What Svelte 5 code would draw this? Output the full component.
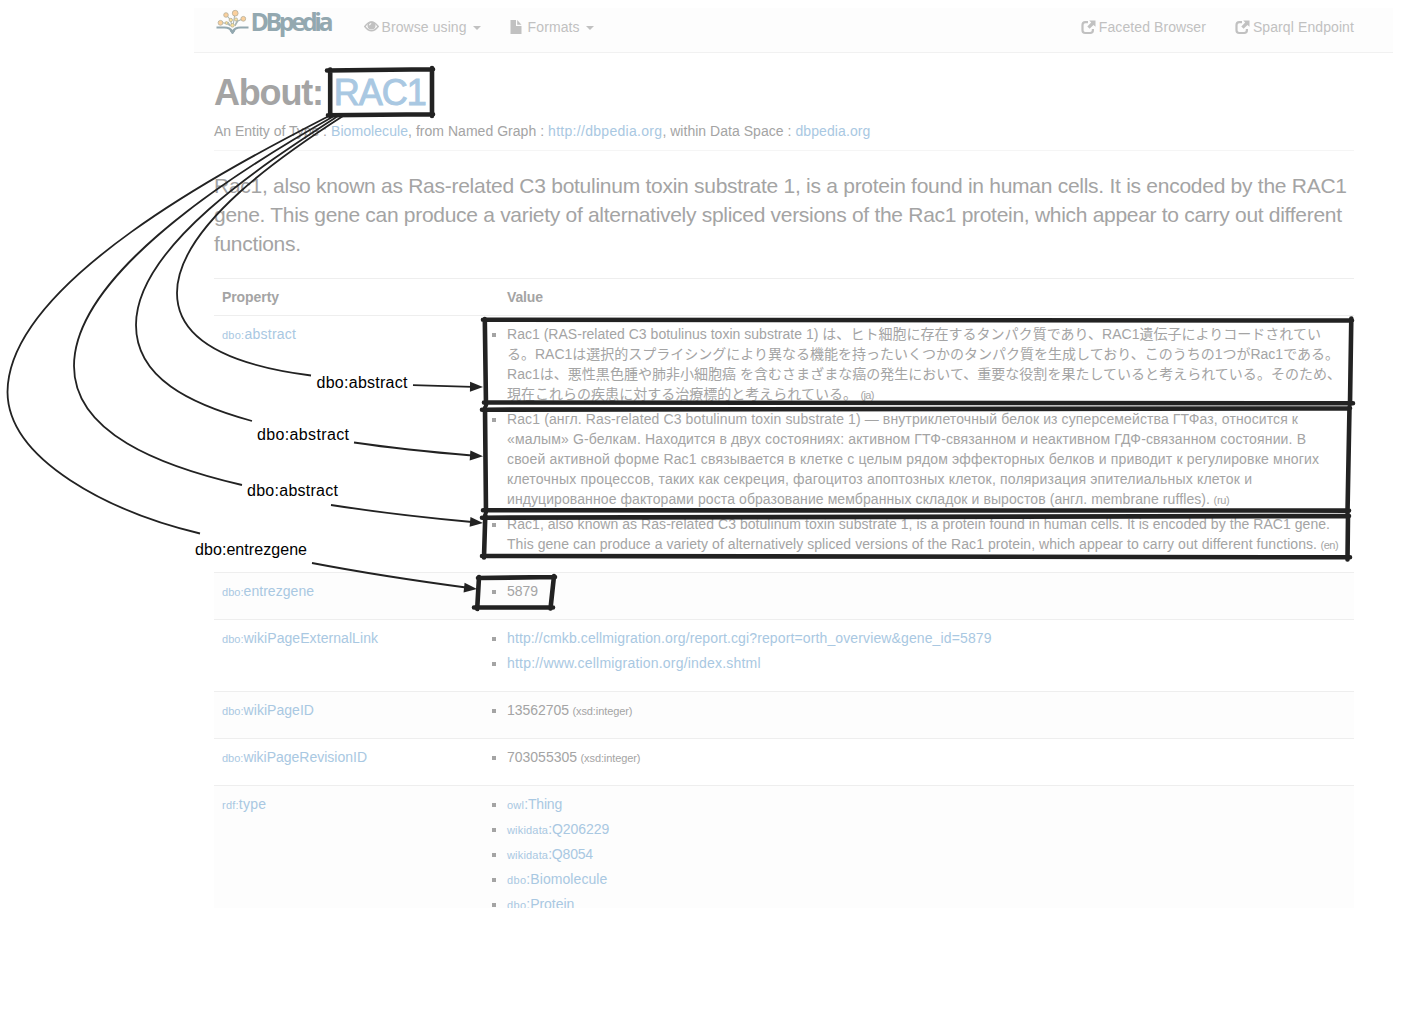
<script>
  // Spreads the letters of a line so that it takes exactly the given width.
  function fit(node, width) {
    const natural = node.getBoundingClientRect().width;
    const count = [...node.textContent].length;
    if (width && count > 1) node.style.letterSpacing = (width - natural) / (count - 1) + 'px';
  }

  const summary = [
    ['Rac1, also known as Ras-related C3 botulinum toxin substrate 1, is a protein found in human cells. It is encoded by the RAC1', 1133],
    ['gene. This gene can produce a variety of alternatively spliced versions of the Rac1 protein, which appear to carry out different', 1128],
    ['functions.', 87]
  ];

  const rows = [
    {
      prefix: 'dbo:', name: 'abstract', width: 74,
      values: [
        {
          lines: [
            ['Rac1 (RAS-related C3 botulinus toxin substrate 1) は、ヒト細胞に存在するタンパク質であり、RAC1遺伝子によりコードされてい', 814],
            ['る。RAC1は選択的スプライシングにより異なる機能を持ったいくつかのタンパク質を生成しており、このうちの1つがRac1である。', 832],
            ['Rac1は、悪性黒色腫や肺非小細胞癌 を含むさまざまな癌の発生において、重要な役割を果たしていると考えられている。そのため、', 834],
            ['現在これらの疾患に対する治療標的と考えられている。', 350]
          ],
          note: '(ja)', noteWidth: 14
        },
        {
          lines: [
            ['Rac1 (англ. Ras-related C3 botulinum toxin substrate 1) — внутриклеточный белок из суперсемейства ГТФаз, относится к', 791],
            ['«малым» G-белкам. Находится в двух состояниях: активном ГТФ-связанном и неактивном ГДФ-связанном состоянии. В', 799],
            ['своей активной форме Rac1 связывается в клетке с целым рядом эффекторных белков и приводит к регулировке многих', 812],
            ['клеточных процессов, таких как секреция, фагоцитоз апоптозных клеток, поляризация эпителиальных клеток и', 745],
            ['индуцированное факторами роста образование мембранных складок и выростов (англ. membrane ruffles).', 703]
          ],
          note: '(ru)', noteWidth: 16
        },
        {
          lines: [
            ['Rac1, also known as Ras-related C3 botulinum toxin substrate 1, is a protein found in human cells. It is encoded by the RAC1 gene.', 823],
            ['This gene can produce a variety of alternatively spliced versions of the Rac1 protein, which appear to carry out different functions.', 810]
          ],
          note: '(en)', noteWidth: 18
        }
      ]
    },
    { prefix: 'dbo:', name: 'entrezgene', width: 92, values: [{ lines: [['5879', 31]] }] },
    {
      prefix: 'dbo:', name: 'wikiPageExternalLink', width: 156,
      values: [
        { link: true, lines: [['http://cmkb.cellmigration.org/report.cgi?report=orth_overview&gene_id=5879', 484.5]] },
        { link: true, lines: [['http://www.cellmigration.org/index.shtml', 253.5]] }
      ]
    },
    { prefix: 'dbo:', name: 'wikiPageID', width: 92, values: [{ lines: [['13562705', 62]], note: '(xsd:integer)', noteWidth: 60 }] },
    { prefix: 'dbo:', name: 'wikiPageRevisionID', width: 145, values: [{ lines: [['703055305', 70]], note: '(xsd:integer)', noteWidth: 60 }] },
    {
      prefix: 'rdf:', name: 'type', width: 44,
      values: [
        { link: true, prefix: 'owl', lines: [[':Thing', 38]], prefixWidth: 17 },
        { link: true, prefix: 'wikidata', lines: [[':Q206229', 61]], prefixWidth: 41 },
        { link: true, prefix: 'wikidata', lines: [[':Q8054', 45]], prefixWidth: 41 },
        { link: true, prefix: 'dbo', lines: [[':Biomolecule', 81]], prefixWidth: 19 },
        { link: true, prefix: 'dbo', lines: [[':Protein', 48]], prefixWidth: 19 }
      ]
    }
  ];

  const curves = [
    'M343 116C290 150 177 225 177 293C177 346 245 367 311 375.5',
    'M338 116C270 160 136 245 136 325C136 378 190 404 252 421',
    'M334 116C260 158 74 268 74 366C74 433 160 466 242 485',
    'M329 116C240 162 8 280 7.5 392C8 460 110 512 200 533.5',
    'M413 385.2Q440 386 472 386.8',
    'M354 442.5Q405 450 472 455.5',
    'M331 505Q395 515 472 522',
    'M312 563Q380 576 466 587.5'
  ];

  const heads = [[483, 387, 1], [483, 456.3, 4], [483, 523, 5], [477, 589, 6]];

  const labels = [
    ['dbo:abstract', 316.5, 388, 91],
    ['dbo:abstract', 257, 440, 92],
    ['dbo:abstract', 247, 496, 91],
    ['dbo:entrezgene', 195, 555, 112]
  ];

  const frames = [
    'M327 70.5L433 69.3M432 68V116M433 114.3L328 115.3M330.2 69.5V116',
    'M483 319.8L1352 320.5M1351.3 318.5L1350 404M1353 403.3L484 402.5M484.8 319L486 405',
    'M482 409.7L1350 408.3M1349.5 407L1347.5 513M1349 510.6L483 510.3M485 408L486 512',
    'M482 517.7L1349 516M1348 515.5L1347.5 559.5M1350 557.3L482 556M485.3 515L484 557.5',
    'M478 578L555 577M554 576L550.5 608.5M553 607.5H474M479 577L477.2 609'
  ];
</script>

<div class="page">
  <nav>
    <svg class="logo" width="120" height="40" viewBox="0 0 120 40">
      <g fill="none" stroke="#a9b6b4" stroke-width="1.100">
        <path d="M17 18L19 5M16 18L14.500 12L10 6.500M14.500 18L11 15.500L5 14.500M19 18L22 13L27.500 10.500M14.500 18L12 14M19 17L21.500 12" />
      </g>
      <path d="M0.500 19.500H8.500Q14 19.500 16.500 23.500Q19 19.500 24.500 19.500H32.500" fill="none" stroke="#93a8b0" stroke-width="2" />
      <path d="M14 22.500L16.500 26L19 22.500Z" fill="#93a8b0" stroke="#93a8b0" />
      <g fill="#fbd09c" stroke="#b5ae9b" stroke-width=".800">
        <circle cx="19.200" cy="5.200" r="2.900" /><circle cx="10" cy="7" r="2.300" />
        <circle cx="27.300" cy="10.800" r="2.400" /><circle cx="4.500" cy="14.800" r="2.400" />
        <g fill="#f9e29a"><circle cx="14.800" cy="12" r="1.700" /><circle cx="20" cy="11.500" r="1.600" /><circle cx="10.500" cy="15" r="1.400" /><circle cx="16.500" cy="17.300" r="1.800" /></g>
      </g>
      <text x="34.500" y="23" textLength="83">DBpedia</text>
    </svg>
    <div class="item browse">
      <svg width="15" height="14" viewBox="0 0 15 14"><path d="M.8 6.500Q7.500-2.500 14.200 6.500Q7.500 15 .8 6.500Z" fill="none" stroke="currentColor" stroke-width="1.500" /><circle cx="7.500" cy="5.600" r="4" fill="currentColor" /><path d="M5.500 5.300Q5.600 3.700 7.200 3.500" fill="none" stroke="#fff" stroke-width="1.100" /></svg>
      <span use:fit={85}>Browse using</span><i class="caret"></i>
    </div>
    <div class="item formats">
      <svg width="12" height="14" viewBox="0 0 12 14"><path d="M.5 0H6V6H11.500V14H.5ZM7.200 0L11.500 4.700H7.200Z" fill="currentColor" /></svg>
      <span use:fit={52}>Formats</span><i class="caret"></i>
    </div>
    <div class="right">
      {#each [['Faceted Browser', 107], ['Sparql Endpoint', 101]] as [title, width]}
        <div class="item">
          <svg width="15" height="15" viewBox="0 0 15 15"><path d="M7 2.200H4.200Q1.500 2.200 1.500 4.900V10.300Q1.500 13 4.200 13H9.200Q11.900 13 11.900 10.300V9" fill="none" stroke="currentColor" stroke-width="2.200" /><path d="M8.200 .5H14.500V6.800L12.500 4.900L8.600 8.800L6.300 6.500L10.200 2.600Z" fill="currentColor" /></svg>
          <span use:fit={width}>{title}</span>
        </div>
      {/each}
    </div>
  </nav>

  <main>
    <header>
      <h1><span use:fit={110}>About:</span><a use:fit={93}>RAC1</a></h1>
      <p class="entity"><span use:fit={113}>An Entity of Type :</span><a use:fit={77}>Biomolecule</a><span use:fit={136}>, from Named Graph :</span><a use:fit={114}>http://dbpedia.org</a><span use:fit={129}>, within Data Space :</span><a use:fit={75}>dbpedia.org</a></p>
    </header>
    <p class="lead">
      {#each summary as [line, width]}<span use:fit={width}>{line}</span>{/each}
    </p>

    <section class="table">
      <div class="row head"><b><span use:fit={57}>Property</span></b><b><span use:fit={36}>Value</span></b></div>
      {#each rows as row}
        <div class="row">
          <div class="prop"><a use:fit={row.width}><small>{row.prefix}</small>{row.name}</a></div>
          <ul>
            {#each row.values as value}
              <li>
                <div>
                  {#each value.lines as [line, width], i}
                    <p class:link={value.link}>
                      {#if value.prefix}<small use:fit={value.prefixWidth}>{value.prefix}</small>{/if}<span use:fit={width}>{line}</span>{#if value.note && i === value.lines.length - 1}<small class="note" use:fit={value.noteWidth}>{value.note}</small>{/if}
                    </p>
                  {/each}
                </div>
              </li>
            {/each}
          </ul>
        </div>
      {/each}
    </section>
  </main>

  <svg class="overlay" width="1401" height="1027" viewBox="0 0 1401 1027">
    {#each curves as d}<path class="curve" {d} />{/each}
    {#each heads as [x, y, angle]}
      <path class="tip" d="M0 0L-13 -5V5Z" transform="translate({x} {y}) rotate({angle})" />
    {/each}
    {#each frames as d}<path class="frame" {d} />{/each}
    {#each labels as [text, x, y, width]}
      <text {x} {y} textLength={width}>{text}</text>
    {/each}
  </svg>
</div>

<style>
  :global(body) { background: #fff; }
  .page {
    position: relative;
    box-sizing: border-box;
    width: 1401px;
    height: 1027px;
    padding: 8px 8px 0 194px;
    overflow: hidden;
    color: #a4a4a4;
    font: 14px/20px "Liberation Sans", "Noto Sans CJK JP", sans-serif;
  }
  nav {
    box-sizing: border-box;
    display: flex;
    height: 45px;
    padding-left: 22px;
    background: #fdfdfd;
    border-bottom: 1px solid #f1f1f1;
    color: #c1c1c1;
  }
  .logo { overflow: visible; }
  .logo text { fill: #93a8b0; font: bold 25px "Open Sans", "Noto Sans", sans-serif; }
  .item { display: flex; align-items: center; height: 38px; white-space: nowrap; }
  .item svg { margin-right: 3px; }
  .browse { margin-left: 27.500px; }
  .formats { margin-left: 29px; }
  .formats svg { margin-right: 6px; }
  .right { display: flex; gap: 29px; margin-left: auto; margin-right: 39px; }
  .caret { margin: 2px 0 0 6px; border: 4px solid transparent; border-top-color: currentColor; border-bottom: 0; }
  main {
    box-sizing: border-box;
    width: 1160px;
    height: 855px;
    padding: 20px 0 0 20px;
    overflow: hidden;
  }
  a, .link { color: #a9c8e2; }
  span, a, small { white-space: nowrap; }
  header { height: 77px; border-bottom: 1px solid #f5f5f5; }
  h1 { display: flex; gap: 11px; margin: 0; font-size: 36px; line-height: 40px; }
  h1 a { font-weight: 400; -webkit-text-stroke: 1px #a9c8e2; }
  .entity { display: flex; margin: 8px 0 0; }
  .entity span { margin-right: 4px; }
  .lead { display: flex; flex-direction: column; align-items: flex-start; margin: 20px 0; font-size: 21px; line-height: 29px; }
  .table { width: 1140px; }
  .row { display: grid; grid-template-columns: 285px 1fr; border-top: 1px solid #eee; }
  .row:nth-child(odd) { background: #fdfdfd; }
  .head.row { background: none; }
  .prop, .head b { padding: 8px; }
  small { font-size: 11px; }
  ul { margin: 0; padding: 8px; list-style: none; }
  ul::after { content: ""; display: block; height: 5px; }
  li { display: flex; gap: 11px; margin: 0 0 5px -16px; }
  li::before { content: ""; flex: none; width: 4px; height: 4px; margin-top: 9px; margin-left: 1px; background: #a4a4a4; }
  li p { height: 20px; margin: 0; white-space: nowrap; }
  .note { margin-left: 3.500px; }
  .overlay { position: absolute; inset: 0; }
  .overlay text { fill: #000; font: 16px "Liberation Sans", sans-serif; }
  .curve { fill: none; stroke: #222; stroke-width: 1.800px; }
  .tip { fill: #222; }
  .frame { fill: none; stroke: #222; stroke-width: 4.600px; stroke-linecap: round; }
</style>
